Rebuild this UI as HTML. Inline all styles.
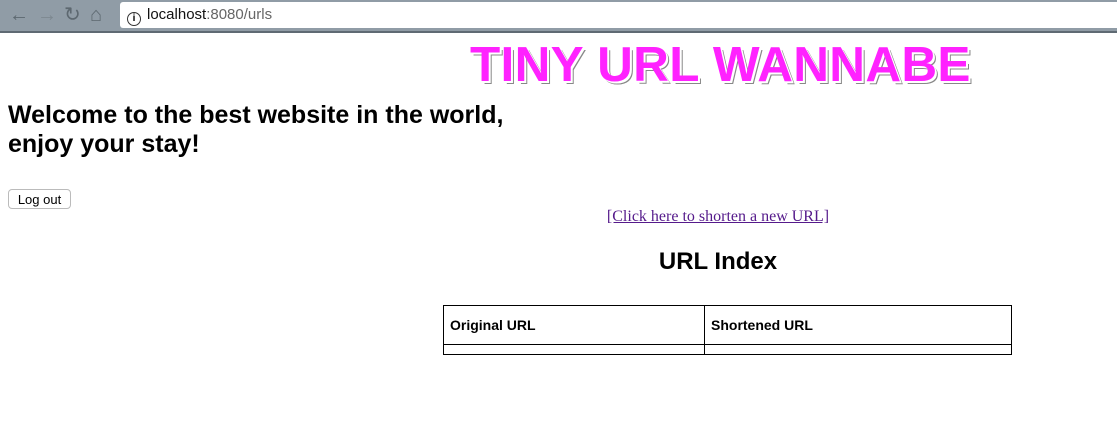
<!DOCTYPE html>
<html><head><meta charset="utf-8"><style>
body{margin:0;width:1117px;height:439px;overflow:hidden;background:#fff;position:relative;font-family:"Liberation Sans",Arial,sans-serif}
.bar{position:absolute;left:0;top:0;width:1117px;height:31px;background:#909ca6;border-bottom:2px solid #5f6a73}
.url{position:absolute;left:120px;top:2px;right:0;height:26px;background:#fff;border-radius:3px 0 0 3px;font-size:15px;line-height:26px}
.nav{position:absolute;top:4px;font-size:20px;color:#5d6870;line-height:22px}
h1.t{position:absolute;left:470px;top:36px;margin:0;font-size:49.5px;font-weight:bold;color:#ff22ff;letter-spacing:0.3px;text-shadow:2px 2px 0 #fff,3px 3px 0 #888;white-space:nowrap}
.w{position:absolute;left:8px;top:101px;margin:0;font-size:25px;font-weight:bold;line-height:29px}
.btn{position:absolute;left:8px;top:189px;width:63px;height:20px;border:1px solid #bbb;border-radius:4px;font-size:13px;line-height:19px;text-align:center;background:#fff;box-sizing:border-box}
a{position:absolute;left:0;width:1436px;top:208px;text-align:center;color:#551a8b;font-family:"Liberation Serif",serif;font-size:16px;text-decoration:underline}
.ix{position:absolute;left:0;width:1436px;top:248px;text-align:center;font-size:24px;font-weight:bold}
table{position:absolute;left:443px;top:305px;width:569px;border-collapse:collapse}
td{border:1px solid #000;font-size:14px;font-weight:bold;padding:0 6px}
</style></head><body>
<div class="bar">
<span class="nav" style="left:9px">←</span>
<span class="nav" style="left:37px;color:#7d8890">→</span>
<span class="nav" style="left:64px">↻</span>
<span class="nav" style="left:90px">⌂</span>
<div class="url"><span style="display:inline-block;width:12px;height:12px;border:1.5px solid #333;border-radius:50%;font-size:10px;line-height:12px;text-align:center;margin:0 6px 0 7px;vertical-align:-2px;font-weight:bold">i</span><span style="color:#111">localhost</span><span style="color:#666">:8080/urls</span></div>
</div>
<h1 class="t">TINY URL WANNABE</h1>
<h2 class="w">Welcome to the best website in the world,<br>enjoy your stay!</h2>
<div class="btn">Log out</div>
<a>[Click here to shorten a new URL]</a>
<div class="ix">URL Index</div>
<table><tr><td style="height:38px;width:248px">Original URL</td><td>Shortened URL</td></tr><tr><td style="height:9px"></td><td></td></tr></table>
</body></html>
